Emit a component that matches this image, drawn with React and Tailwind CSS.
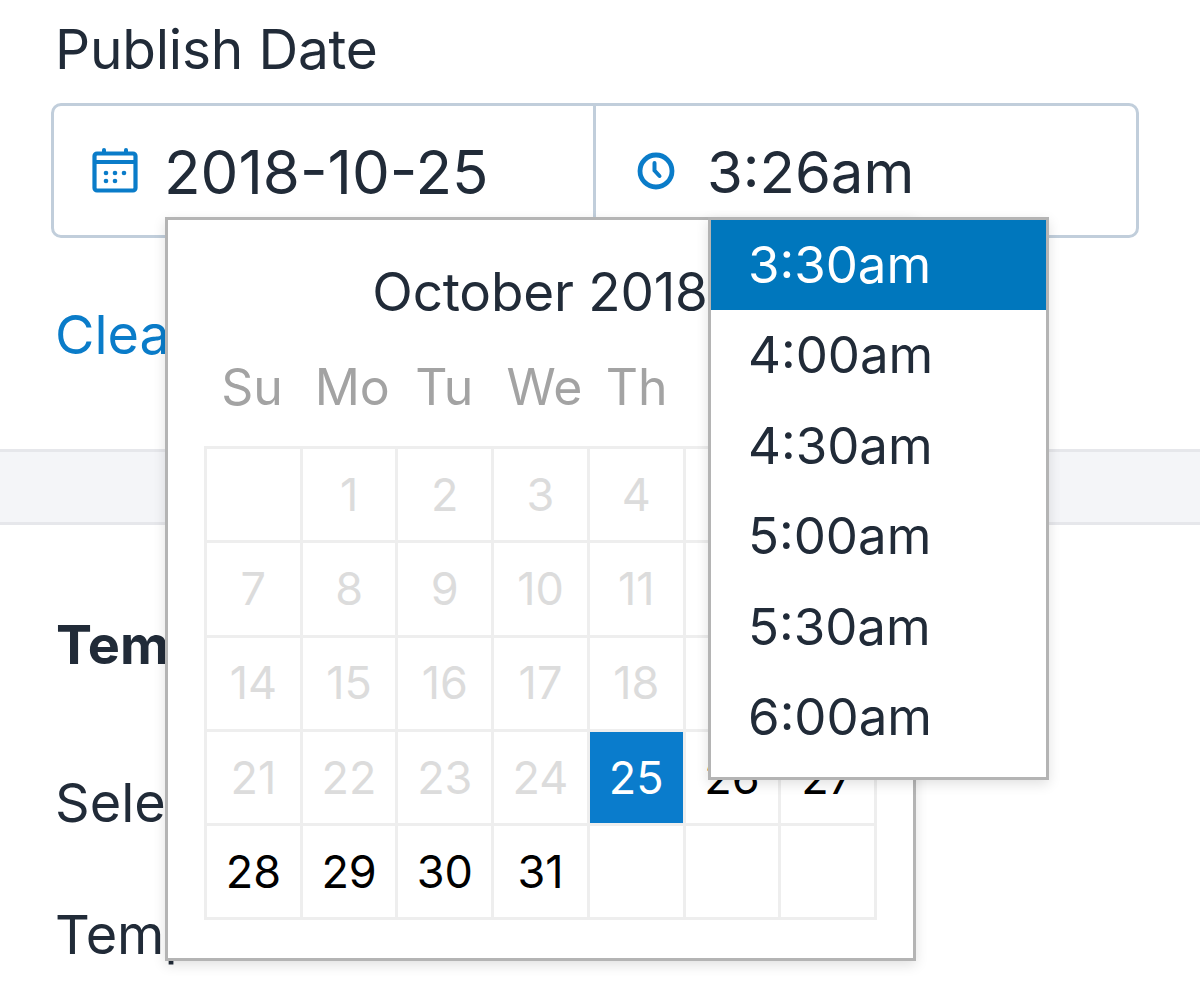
const days = [
  ["", "1", "2", "3", "4", "5", "6"],
  ["7", "8", "9", "10", "11", "12", "13"],
  ["14", "15", "16", "17", "18", "19", "20"],
  ["21", "22", "23", "24", "25", "26", "27"],
  ["28", "29", "30", "31", "", "", ""],
];
const times = ["3:30am", "4:00am", "4:30am", "5:00am", "5:30am", "6:00am"];

function CalendarIcon() {
  return (
    <svg width="46" height="45" viewBox="0 0 46 45" className="shrink-0">
      <rect x="2.5" y="5.5" width="41" height="37" rx="2.5" fill="none" stroke="#0a7cc9" strokeWidth="4.2" />
      <path d="M2 14h42" fill="none" stroke="#0a7cc9" strokeWidth="4" />
      <rect x="10" y="0" width="4" height="7" rx="2" fill="#0a7cc9" />
      <rect x="32" y="0" width="4" height="7" rx="2" fill="#0a7cc9" />
      {[[14, 25], [23, 25], [32, 25], [14, 33], [23, 33]].map(([cx, cy]) => (
        <circle key={cx + "-" + cy} cx={cx} cy={cy} r="2.3" fill="#0a7cc9" />
      ))}
    </svg>
  );
}

function ClockIcon() {
  return (
    <svg width="38" height="38" viewBox="0 0 38 38" className="shrink-0">
      <circle cx="19" cy="19" r="16" fill="none" stroke="#0a7cc9" strokeWidth="4.8" />
      <path d="M17.5 11v7.5l5 5.5" fill="none" stroke="#0a7cc9" strokeWidth="4" strokeLinecap="round" />
    </svg>
  );
}

export default function App() {
  return (
    <div className="relative w-[1200px] h-[985px] overflow-hidden bg-white text-[#212b38] font-['Inter',sans-serif]">
      <div className="pl-[55px] pt-[21px] text-[55px] leading-[56px] tracking-[-0.2px]">Publish Date</div>
      <div className="ml-[51px] mt-[26px] flex h-[135px] w-[1088px] rounded-[10px] border-[3px] border-[#c1cedb]">
        <div className="flex w-[542px] items-center gap-[26px] border-r-[3px] border-[#c1cedb] pl-[38px]">
          <CalendarIcon />
          <span className="pt-[2px] text-[60px] leading-none">2018-10-25</span>
        </div>
        <div className="flex flex-1 items-center gap-[32px] pl-[41px]">
          <ClockIcon />
          <span className="pt-[2px] text-[58px] leading-none">3:26am</span>
        </div>
      </div>
      <div className="pl-[55px] pt-[69px] text-[54px] leading-[56px] text-[#0a7cc9]">Clear</div>
      <div className="mt-[86px] h-[76px] border-y-[3px] border-[#e6e7eb] bg-[#f4f5f8]" />
      <div className="pl-[56px] pt-[90px] text-[54px] leading-[60px] font-bold">Template</div>
      <div className="pl-[55px] pt-[100px] text-[54px] leading-[56px]">Select a Template</div>
      <div className="pl-[55px] pt-[76px] text-[54px] leading-[56px]">Template</div>

      <div className="absolute left-[165px] top-[217px] h-[744px] w-[751px] border-[3px] border-[#b4b4b4] bg-white pl-[36px] shadow-[0_4px_12px_rgba(0,0,0,0.12)]">
        <div className="pt-[44px] pr-[37px] text-center text-[53px] leading-[56px] tracking-[-0.2px]">October 2018</div>
        <div className="mt-[39px] grid w-[673px] grid-cols-7 text-center text-[50px] leading-[56px] text-[#a3a3a3]">
          {["Su", "Mo", "Tu", "We", "Th", "Fr", "Sa"].map((d) => (
            <div key={d} className={d === "Mo" || d === "We" ? "pl-[8px]" : ""}>
              {d}
            </div>
          ))}
        </div>
        <div className="mt-[31px] grid w-[673px] grid-cols-7 border-l-[3px] border-t-[3px] border-[#eeeeee] text-[45px]">
          {days.flat().map((d, i) => {
            const n = Number(d);
            const selected = n === 25;
            const active = n > 25;
            return (
              <div
                key={i}
                className={
                  selected
                    ? "flex h-[94.3px] items-center justify-center border-b-[3px] border-r-[3px] border-[#eeeeee] bg-[#0a7ccc] text-white"
                    : active
                      ? "flex h-[94.3px] items-center justify-center border-b-[3px] border-r-[3px] border-[#eeeeee] text-black"
                      : "flex h-[94.3px] items-center justify-center border-b-[3px] border-r-[3px] border-[#eeeeee] text-[#dcdcdc]"
                }
              >
                {d}
              </div>
            );
          })}
        </div>
      </div>

      <div className="absolute left-[708px] top-[217px] h-[563px] w-[341px] border-[3px] border-[#b4b4b4] bg-white shadow-[0_4px_12px_rgba(0,0,0,0.12)]">
        {times.map((t, i) => (
          <div
            key={t}
            className={
              i === 0
                ? "flex h-[90.4px] items-center bg-[#0077bd] pl-[37px] text-[51px] text-white"
                : "flex h-[90.4px] items-center pl-[37px] text-[51px]"
            }
          >
            {t}
          </div>
        ))}
      </div>
    </div>
  );
}
